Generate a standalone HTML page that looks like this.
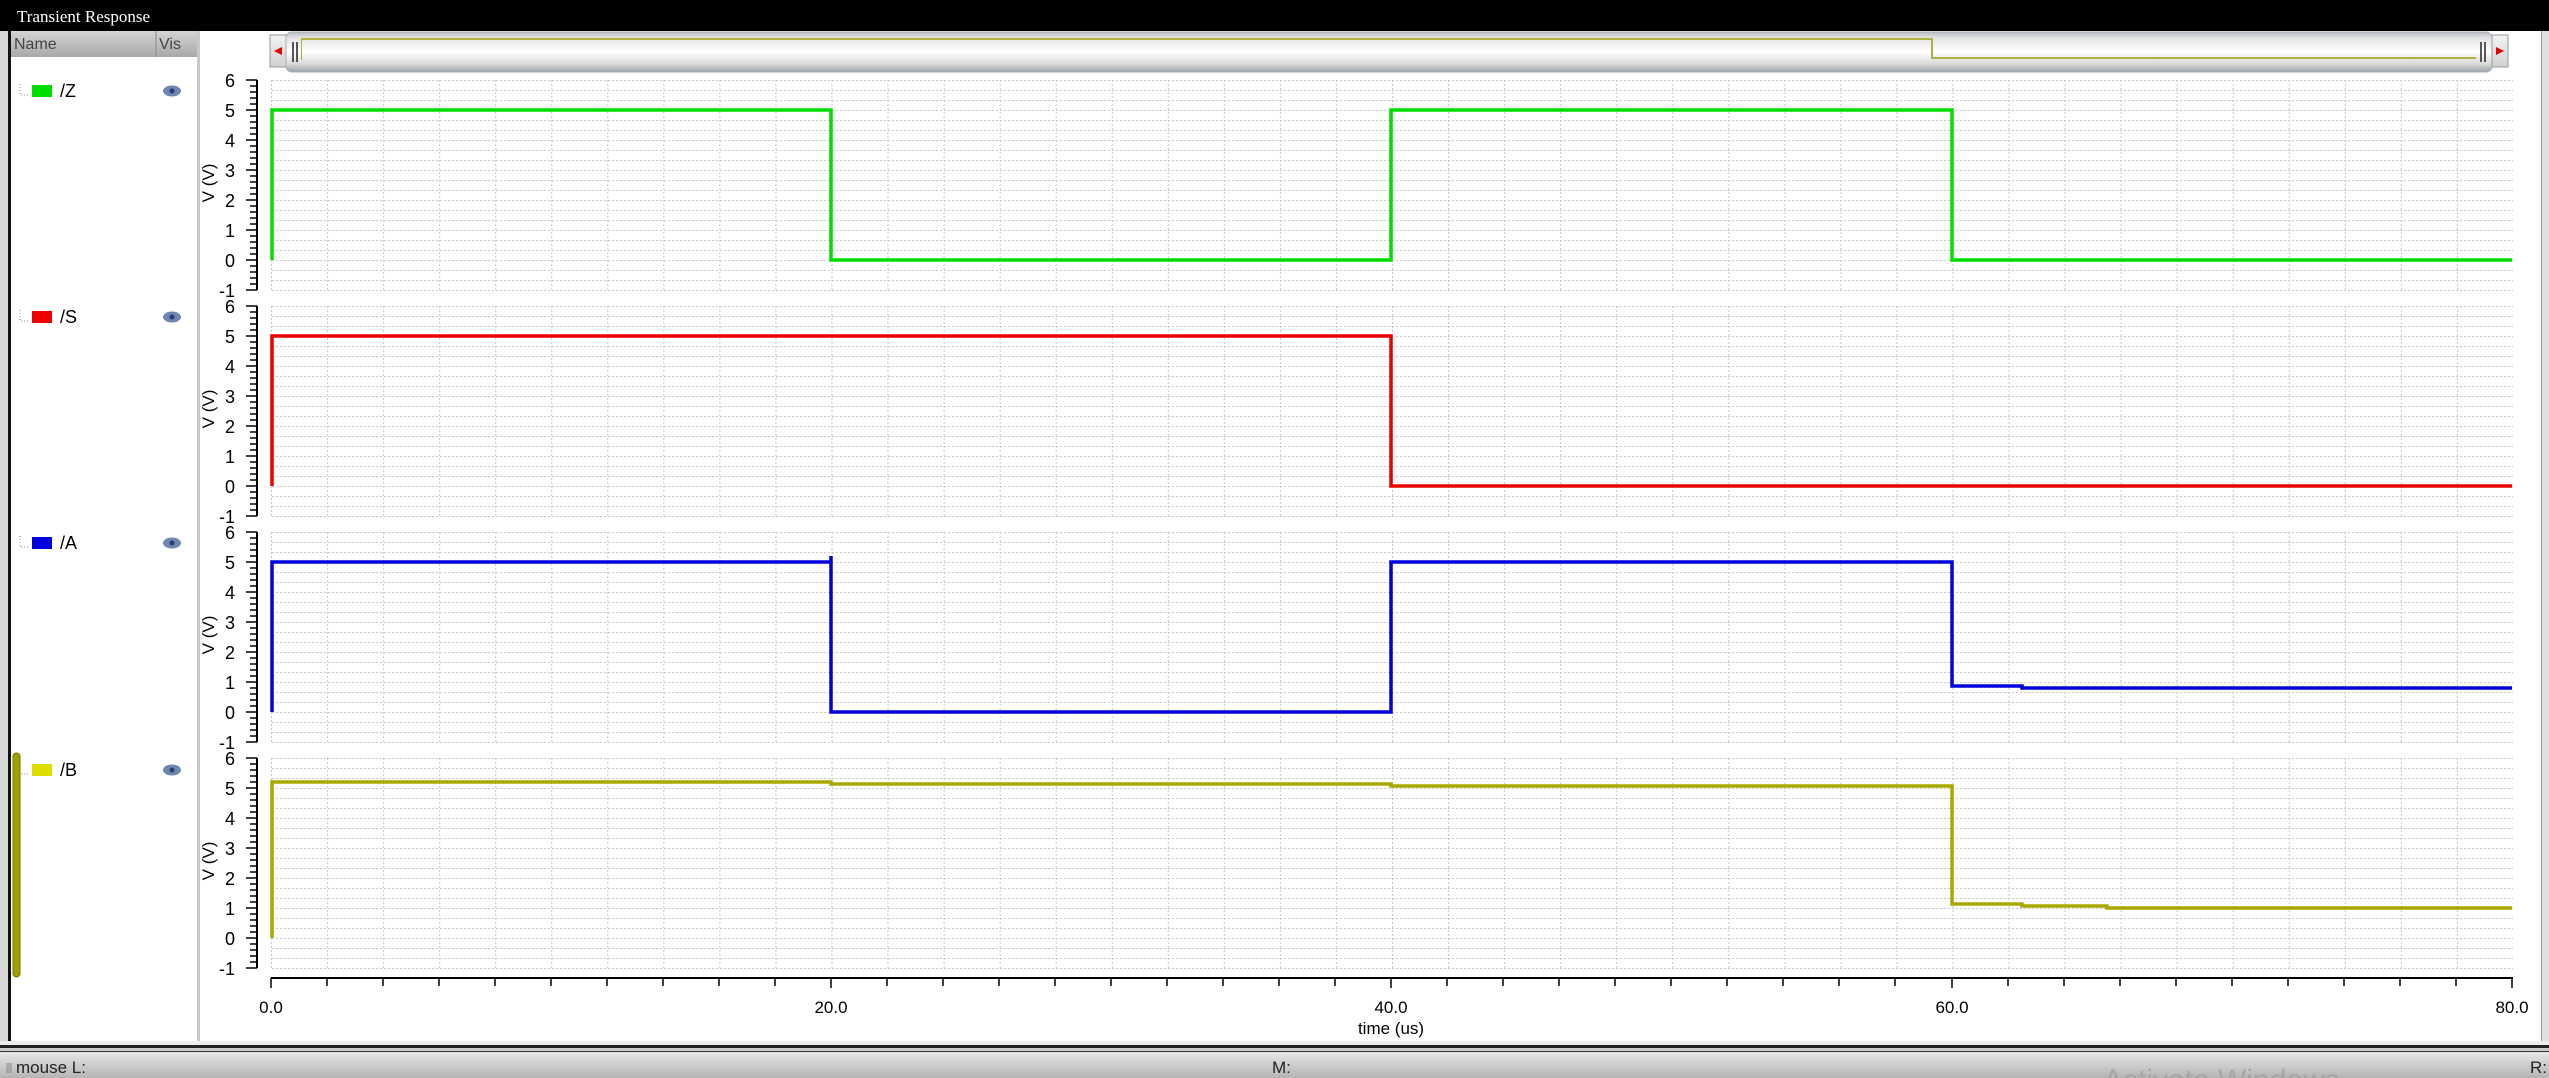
<!DOCTYPE html>
<html><head><meta charset="utf-8"><style>
html,body{margin:0;padding:0;background:#fff;width:2549px;height:1078px;overflow:hidden}
svg{display:block}
text{font-family:"Liberation Sans",sans-serif}
</style></head><body>
<svg width="2549" height="1078" viewBox="0 0 2549 1078" xmlns="http://www.w3.org/2000/svg">
<defs>
<linearGradient id="hdr" x1="0" y1="0" x2="0" y2="1"><stop offset="0" stop-color="#d4d4d4"/><stop offset="1" stop-color="#a8a8a8"/></linearGradient>
<linearGradient id="sb" x1="0" y1="0" x2="0" y2="1"><stop offset="0" stop-color="#b8bcc2"/><stop offset="0.15" stop-color="#e4e4e4"/><stop offset="0.5" stop-color="#ffffff"/><stop offset="0.8" stop-color="#d8d8d8"/><stop offset="1" stop-color="#9aa2ac"/></linearGradient>
<linearGradient id="st" x1="0" y1="0" x2="0" y2="1"><stop offset="0" stop-color="#e6e6e6"/><stop offset="1" stop-color="#b4b4b4"/></linearGradient>
<linearGradient id="btn" x1="0" y1="0" x2="0" y2="1"><stop offset="0" stop-color="#f4f4f4"/><stop offset="1" stop-color="#d0d0d0"/></linearGradient>
<pattern id="gh" width="4" height="10" patternUnits="userSpaceOnUse"><rect x="0" y="0" width="2" height="1" fill="#c8c8c8"/></pattern>
<pattern id="gv" width="56.05" height="4" patternUnits="userSpaceOnUse" x="271"><rect x="0" y="0" width="1" height="2" fill="#c8c8c8"/></pattern>
<g id="axis">
<rect x="270" y="0" width="2243" height="211" fill="url(#gh)"/>
<rect x="270" y="0" width="2243" height="211" fill="url(#gv)"/>
<line x1="257" y1="0" x2="257" y2="210" stroke="#000" stroke-width="2"/>
<path d="M246 0H257M250 6H257M250 12H257M250 18H257M250 24H257M246 30H257M250 36H257M250 42H257M250 48H257M250 54H257M246 60H257M250 66H257M250 72H257M250 78H257M250 84H257M246 90H257M250 96H257M250 102H257M250 108H257M250 114H257M246 120H257M250 126H257M250 132H257M250 138H257M250 144H257M246 150H257M250 156H257M250 162H257M250 168H257M250 174H257M246 180H257M250 186H257M250 192H257M250 198H257M250 204H257M246 210H257" stroke="#000" stroke-width="1.5"/>
<g font-size="18" text-anchor="middle" fill="#000">
<text x="230" y="7">6</text><text x="230" y="37">5</text><text x="230" y="67">4</text><text x="230" y="97">3</text><text x="230" y="127">2</text><text x="230" y="157">1</text><text x="230" y="187">0</text><text x="227" y="217">-1</text>
</g>
<text transform="translate(214,103) rotate(-90)" font-size="17" text-anchor="middle">V (V)</text>
</g>
</defs>
<!-- frame -->
<rect x="0" y="0" width="2549" height="1078" fill="#fff"/>
<rect x="0" y="0" width="2549" height="31" fill="#000"/>
<text x="17" y="22" font-family="Liberation Serif,serif" font-size="17" fill="#fff" style="font-family:'Liberation Serif',serif">Transient Response</text>
<rect x="0" y="31" width="8" height="1020" fill="#d8d8d8"/>
<rect x="8" y="31" width="3" height="1016" fill="#111"/>
<rect x="2542" y="31" width="7" height="1020" fill="#e0e0e0"/>
<rect x="2541" y="31" width="1" height="1016" fill="#999"/>
<!-- name panel -->
<rect x="11" y="31" width="187" height="26" fill="url(#hdr)"/>
<line x1="156" y1="31" x2="156" y2="57" stroke="#888"/>
<text x="14" y="49" font-size="16" fill="#444">Name</text>
<text x="159" y="49" font-size="16" fill="#444">Vis</text>
<rect x="197" y="31" width="3" height="1010" fill="#c8c8c8"/>
<!-- legend items -->
<g font-size="18" fill="#000">
<g transform="translate(0,91)"><path d="M20 -7V4H28" stroke="#888" stroke-dasharray="1 2" fill="none"/><rect x="32" y="-6" width="20" height="12" fill="#00dd00"/><text x="60" y="6">/Z</text></g>
<g transform="translate(0,317)"><path d="M20 -7V4H28" stroke="#888" stroke-dasharray="1 2" fill="none"/><rect x="32" y="-6" width="20" height="12" fill="#ee0000"/><text x="60" y="6">/S</text></g>
<g transform="translate(0,543)"><path d="M20 -7V4H28" stroke="#888" stroke-dasharray="1 2" fill="none"/><rect x="32" y="-6" width="20" height="12" fill="#0000dd"/><text x="60" y="6">/A</text></g>
<g transform="translate(0,770)"><path d="M20 -7V4H28" stroke="#888" stroke-dasharray="1 2" fill="none"/><rect x="32" y="-6" width="20" height="12" fill="#dddd00"/><text x="60" y="6">/B</text></g>
</g>
<g fill="#6f86b0"><ellipse cx="172" cy="91" rx="9" ry="5.5"/><ellipse cx="172" cy="317" rx="9" ry="5.5"/><ellipse cx="172" cy="543" rx="9" ry="5.5"/><ellipse cx="172" cy="770" rx="9" ry="5.5"/></g>
<g fill="#2a3f70"><circle cx="172" cy="91" r="2.5"/><circle cx="172" cy="317" r="2.5"/><circle cx="172" cy="543" r="2.5"/><circle cx="172" cy="770" r="2.5"/></g>
<rect x="13" y="753" width="7" height="224" rx="3.5" fill="#a0a000" stroke="#777700"/>
<!-- scrollbar -->
<rect x="270" y="35" width="16" height="32" fill="url(#btn)" stroke="#999"/>
<path d="M274 51L282 47V55Z" fill="#e00000"/>
<rect x="286" y="32" width="2206" height="40" rx="6" fill="url(#sb)" stroke="#a8aeb6"/>
<rect x="302" y="38" width="1630" height="2" fill="#b0b040"/>
<rect x="1931" y="38" width="2" height="20" fill="#b0b040"/>
<rect x="1931" y="57" width="545" height="2" fill="#b0b040"/>
<rect x="301" y="38" width="1" height="22" fill="#b0b040"/>
<path d="M293 42V62M297 42V62" stroke="#222" stroke-width="1.5"/>
<path d="M2481 42V62M2485 42V62" stroke="#222" stroke-width="1.5"/>
<rect x="2492" y="35" width="16" height="32" fill="url(#btn)" stroke="#999"/>
<path d="M2504 51L2496 47V55Z" fill="#e00000"/>
<!-- plots -->
<use href="#axis" transform="translate(0,80)"/>
<use href="#axis" transform="translate(0,306)"/>
<use href="#axis" transform="translate(0,532)"/>
<use href="#axis" transform="translate(0,758)"/>
<g fill="none" stroke-width="3.5" stroke-linejoin="miter">
<path stroke="#00dd00" d="M272 260V110H831V260H1391V110H1952V260H2512"/>
<path stroke="#ee0000" d="M272 486V336H1391V486H2512"/>
<path stroke="#0000dd" d="M272 712V562H831V556M831 562V712H1391V562H1952V686H2022V688H2512"/>
<path stroke="#a8a800" d="M272 938V782H831V784H1391V786H1952V904H2022V906H2107V908H2512"/>
</g>
<!-- x axis -->
<line x1="271" y1="978" x2="2513" y2="978" stroke="#000" stroke-width="2"/>
<path stroke="#000" stroke-width="1.5" d="M271 978V988M327 978V986M383 978V986M439 978V986M495 978V986M551 978V986M607 978V986M663 978V986M719 978V986M775 978V986M831 978V988M887 978V986M943 978V986M999 978V986M1055 978V986M1111 978V986M1167 978V986M1223 978V986M1279 978V986M1335 978V986M1391 978V988M1447 978V986M1503 978V986M1559 978V986M1615 978V986M1671 978V986M1727 978V986M1783 978V986M1839 978V986M1895 978V986M1952 978V988M2008 978V986M2064 978V986M2120 978V986M2176 978V986M2232 978V986M2288 978V986M2344 978V986M2400 978V986M2456 978V986M2512 978V988"/>
<g font-size="17" text-anchor="middle">
<text x="271" y="1013">0.0</text><text x="831" y="1013">20.0</text><text x="1391" y="1013">40.0</text><text x="1952" y="1013">60.0</text><text x="2512" y="1013">80.0</text>
<text x="1391" y="1034">time (us)</text>
</g>
<!-- bottom -->
<rect x="0" y="1041" width="2549" height="4" fill="#eee"/>
<rect x="0" y="1045" width="2549" height="3" fill="#222"/>
<rect x="0" y="1048" width="2549" height="3" fill="#ccc"/>
<rect x="0" y="1051" width="2549" height="1" fill="#333"/>
<rect x="0" y="1052" width="2549" height="26" fill="url(#st)"/>
<path d="M7 1063V1073M9 1063V1073M11 1063V1073" stroke="#888"/>
<g font-size="17" fill="#222">
<text x="16" y="1073">mouse L:</text>
<text x="1272" y="1073">M:</text>
<text x="2530" y="1073">R:</text>
</g>
<text x="2103" y="1090" font-size="30" fill="#a0a0a0" fill-opacity="0.8">Activate Windows</text>
</svg>
</body></html>
